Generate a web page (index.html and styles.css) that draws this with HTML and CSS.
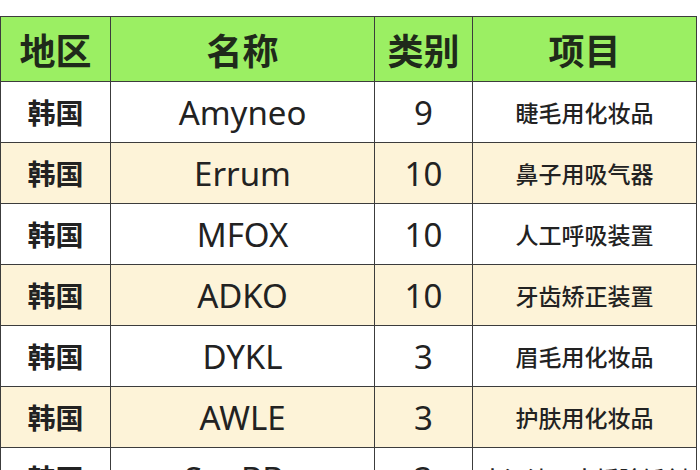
FILE: index.html
```html
<!DOCTYPE html>
<html lang="zh-CN">
<head>
<meta charset="utf-8">
<title>商标表</title>
<link rel="stylesheet" href="styles.css">
</head>
<body>
<div class="page">
  <table class="tm-table">
    <colgroup>
      <col class="c-region">
      <col class="c-name">
      <col class="c-class">
      <col class="c-item">
    </colgroup>
    <thead>
      <tr class="head-row">
        <th>地区</th>
        <th>名称</th>
        <th>类别</th>
        <th>项目</th>
      </tr>
    </thead>
    <tbody>
      <tr class="row">
        <td class="region">韩国</td>
        <td class="name">Amyneo</td>
        <td class="num">9</td>
        <td class="item">睫毛用化妆品</td>
      </tr>
      <tr class="row alt">
        <td class="region">韩国</td>
        <td class="name">Errum</td>
        <td class="num">10</td>
        <td class="item">鼻子用吸气器</td>
      </tr>
      <tr class="row">
        <td class="region">韩国</td>
        <td class="name">MFOX</td>
        <td class="num">10</td>
        <td class="item">人工呼吸装置</td>
      </tr>
      <tr class="row alt">
        <td class="region">韩国</td>
        <td class="name">ADKO</td>
        <td class="num">10</td>
        <td class="item">牙齿矫正装置</td>
      </tr>
      <tr class="row">
        <td class="region">韩国</td>
        <td class="name">DYKL</td>
        <td class="num">3</td>
        <td class="item">眉毛用化妆品</td>
      </tr>
      <tr class="row alt">
        <td class="region">韩国</td>
        <td class="name">AWLE</td>
        <td class="num">3</td>
        <td class="item">护肤用化妆品</td>
      </tr>
      <tr class="row">
        <td class="region">韩国</td>
        <td class="name">SoaBBy</td>
        <td class="num">3</td>
        <td class="item">去污渍、去垢除锈剂</td>
      </tr>
    </tbody>
  </table>
</div>
</body>
</html>
```
FILE: styles.css
```css
html, body {
  margin: 0;
  padding: 0;
  background: #ffffff;
}

.page {
  padding-top: 16px;
  width: 700px;
  height: 470px;
  overflow: hidden;
  box-sizing: border-box;
}

.tm-table {
  border-collapse: collapse;
  table-layout: fixed;
  width: 696px;
  color: #222222;
  font-family: "Noto Sans", "Noto Sans CJK SC", sans-serif;
}

.c-region { width: 110px; }
.c-name { width: 264px; }
.c-class { width: 98px; }
.c-item { width: 224px; }

.tm-table th,
.tm-table td {
  border: 1px solid #3c3c3c;
  text-align: center;
  vertical-align: middle;
  padding: 0;
  white-space: nowrap;
  overflow: hidden;
}

.head-row {
  height: 65px;
  background: #9bef63;
}

.head-row th {
  font-family: "Noto Sans CJK SC", sans-serif;
  font-weight: 700;
  font-size: 36px;
  color: #1f2a1a;
}

.row {
  height: 61px;
  background: #ffffff;
}

.row.alt {
  background: #fdf3d8;
}

.region {
  font-family: "Noto Sans CJK SC", sans-serif;
  font-weight: 700;
  font-size: 28px;
}

.name {
  font-size: 33px;
  font-weight: 400;
}

.num {
  font-size: 33px;
  font-weight: 400;
}

.item {
  font-family: "Noto Sans CJK SC", sans-serif;
  font-weight: 500;
  font-size: 23px;
}
```
